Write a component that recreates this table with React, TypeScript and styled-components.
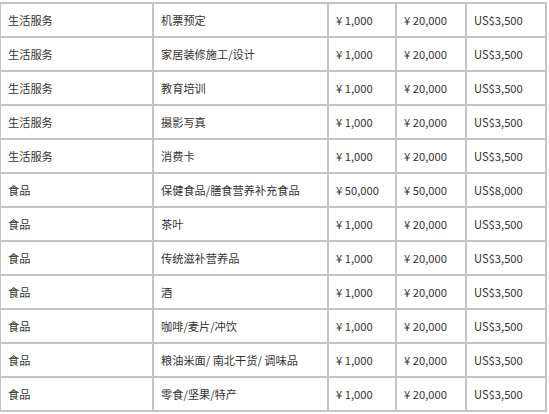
import styled, { createGlobalStyle } from "styled-components";

const GlobalStyle = createGlobalStyle`
  html, body {
    margin: 0;
    padding: 0;
    background: #ffffff;
  }
`

const rows = [
  ["生活服务", "机票预定", "¥ 1,000", "¥ 20,000", "US$3,500"],
  ["生活服务", "家居装修施工/设计", "¥ 1,000", "¥ 20,000", "US$3,500"],
  ["生活服务", "教育培训", "¥ 1,000", "¥ 20,000", "US$3,500"],
  ["生活服务", "摄影写真", "¥ 1,000", "¥ 20,000", "US$3,500"],
  ["生活服务", "消费卡", "¥ 1,000", "¥ 20,000", "US$3,500"],
  ["食品", "保健食品/膳食营养补充食品", "¥ 50,000", "¥ 50,000", "US$8,000"],
  ["食品", "茶叶", "¥ 1,000", "¥ 20,000", "US$3,500"],
  ["食品", "传统滋补营养品", "¥ 1,000", "¥ 20,000", "US$3,500"],
  ["食品", "酒", "¥ 1,000", "¥ 20,000", "US$3,500"],
  ["食品", "咖啡/麦片/冲饮", "¥ 1,000", "¥ 20,000", "US$3,500"],
  ["食品", "粮油米面/ 南北干货/ 调味品", "¥ 1,000", "¥ 20,000", "US$3,500"],
  ["食品", "零食/坚果/特产", "¥ 1,000", "¥ 20,000", "US$3,500"],
]

const widths = [153, 175, 68, 70, 80]

function App() {
  return (
    <>
      <GlobalStyle />
      <Page>
        <Table>
          <colgroup>
            {widths.map((w, i) => (
              <col key={i} style={{ width: w }} />
            ))}
          </colgroup>
          <tbody>
            {rows.map((r, i) => (
              <Row key={i}>
                {r.map((c, j) => (
                  <Cell key={j}>{c}</Cell>
                ))}
              </Row>
            ))}
          </tbody>
        </Table>
      </Page>
    </>
  )
}

const Page = styled.div`
  width: 549px;
  height: 414px;
  overflow: hidden;
  padding-top: 2px;
  box-sizing: border-box;
`

const Table = styled.table`
  width: 547px;
  margin-left: -1px;
  border-collapse: collapse;
  table-layout: fixed;
  font-family: "Noto Sans CJK SC", "Noto Sans", sans-serif;
  font-size: 11.2px;
  color: #333333;
`

const Row = styled.tr`
  height: 34px;
`

const Cell = styled.td`
  border: 2px solid #c4c4c4;
  padding: 0 0 0 7px;
  vertical-align: middle;
  white-space: pre;
  overflow: hidden;
`

export default App;
